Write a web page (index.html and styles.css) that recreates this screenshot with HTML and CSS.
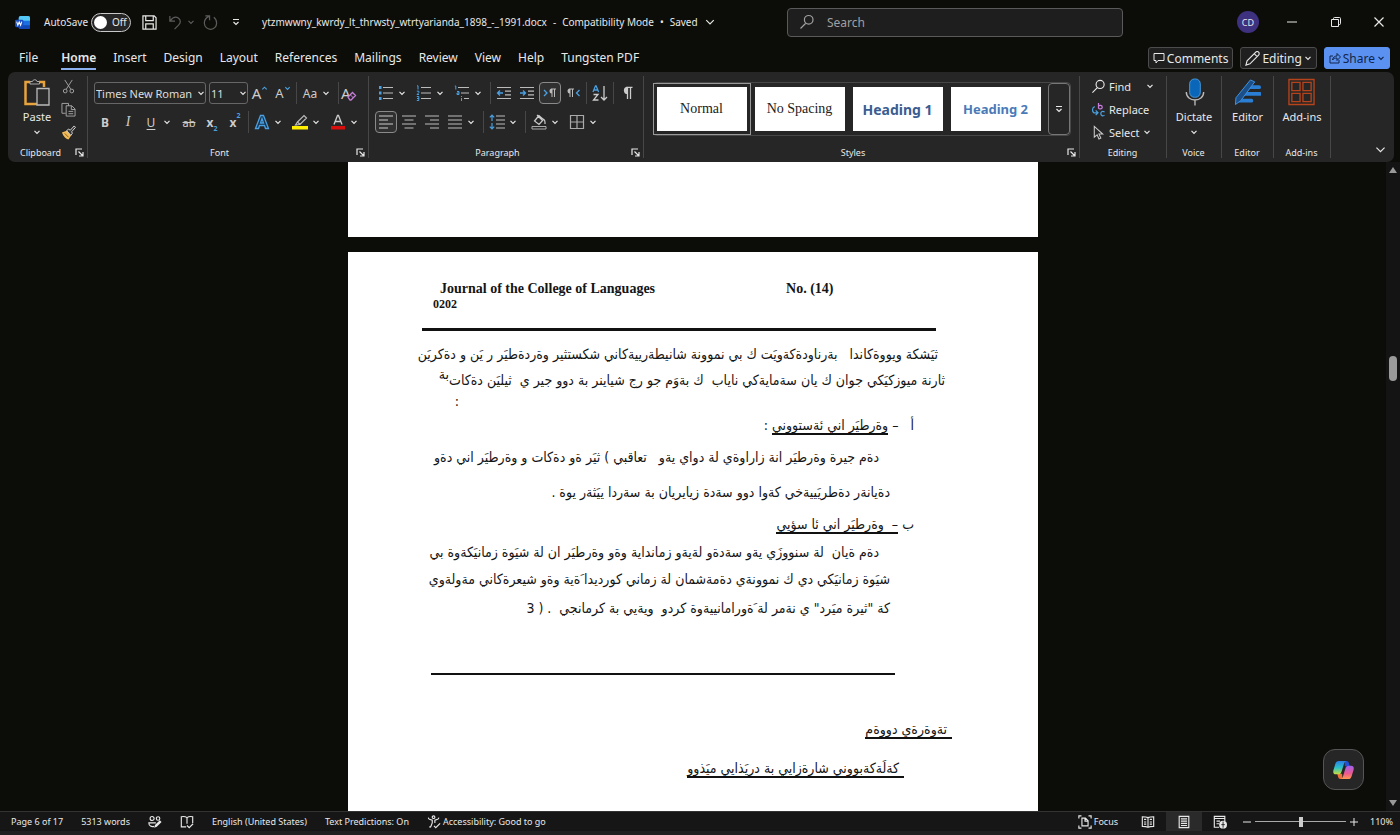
FILE: index.html
```html
<!DOCTYPE html>
<html lang="en">
<head>
    <meta charset="UTF-8">
    <meta name="viewport" content="width=device-width, initial-scale=1.0">
    <title>ytzmwwny_kwrdy_lt_thrwsty_wtrtyarianda_1898_-_1991.docx - Word</title>
    <link rel="stylesheet" href="styles.css">
</head>
<body>
    <!-- Shared icons -->
    <svg class="sprite" aria-hidden="true">
        <symbol id="chev" viewBox="0 0 8 8"><path d="M1.5 2.8 4 5.3 6.500 2.800" fill="none" stroke="currentColor" stroke-width="1.200" vector-effect="non-scaling-stroke"/></symbol>
        <symbol id="more" viewBox="0 0 8 8"><path d="M1 1.500h6M1.500 4 4 6.500 6.500 4" fill="none" stroke="currentColor" stroke-width="1.200"/></symbol>
        <symbol id="launch" viewBox="0 0 9 9"><path d="M1 7V1h6M3.500 3.500 8 8M8 4v4H4" fill="none" stroke="currentColor" stroke-width="1.200"/></symbol>
        <symbol id="lens" viewBox="0 0 16 16"><path d="M6.500 9.500 1.500 14.500M14 5.800a4.300 4.300 0 1 1-8.600 0 4.300 4.300 0 0 1 8.600 0z" fill="none" stroke="currentColor" stroke-width="1.200"/></symbol>
    </svg>

    <header class="titlebar">
        <div class="title-left">
            <svg class="word-logo" viewBox="0 0 16 16">
                <rect x="4" y="1" width="12" height="14" rx="2" fill="#1b6fe0"/>
                <path d="M6 1h8a2 2 0 0 1 2 2v3H4V3a2 2 0 0 1 2-2z" fill="#53c8f5"/>
                <path d="M4 11h12v2a2 2 0 0 1-2 2H6a2 2 0 0 1-2-2z" fill="#1247b8"/>
                <rect y="5" width="9" height="8" rx="1.500" fill="#1a4fc4"/>
                <path d="M1.800 7l1.200 4 1.500-3.600L6 11l1.200-4" fill="none" stroke="#fff" stroke-width="1.100"/>
            </svg>
            <label class="autosave">AutoSave
                <span class="toggle"><input type="checkbox"><span>Off</span></span>
            </label>
            <button class="qa" aria-label="Save"><svg viewBox="0 0 16 16"><path d="M1 1h12l2 2v12H1zM4 1v5h8V1M4 15V9.500h8V15" fill="none" stroke="currentColor" stroke-width="1.300"/></svg></button>
            <button class="qa dim" aria-label="Undo"><svg viewBox="0 0 16 16"><path d="M2 1v5.500h5.500M2.300 6.200C5 2.500 8.500 1.500 11 3.200c3 2.200 2.500 5.300.5 7.300L7 15" fill="none" stroke="currentColor" stroke-width="1.300"/></svg></button>
            <button class="qa-arrow dim" aria-label="Undo list"><svg><use href="#chev"/></svg></button>
            <button class="qa dim" aria-label="Redo"><svg viewBox="0 0 16 16"><path d="M2.500 1h4.500v4.500M6.500 1.500C3 3 1.200 5.500 1.500 9a6.500 6.500 0 0 0 13-.5c0-2.500-1-4.500-3-6" fill="none" stroke="currentColor" stroke-width="1.300"/></svg></button>
            <button class="qa-arrow last" aria-label="Customize toolbar"><svg><use href="#more"/></svg></button>
            <button class="doc-name"><span>ytzmwwny_kwrdy_lt_thrwsty_wtrtyarianda_1898_-_1991.docx</span><span>-</span><span>Compatibility Mode</span><span>•</span><span>Saved</span><svg><use href="#chev"/></svg></button>
        </div>
        <label class="search">
            <svg><use href="#lens"/></svg>
            <input type="search" placeholder="Search" aria-label="Search">
        </label>
        <div class="title-right">
            <button class="avatar">CD</button>
            <button class="win" aria-label="Minimize"><svg viewBox="0 0 10 10"><path d="M0 5h10" stroke="currentColor"/></svg></button>
            <button class="win" aria-label="Restore"><svg viewBox="0 0 10 10"><path d="M.5 2.500h7v7h-7zM2.500 2.500V1.500a1 1 0 0 1 1-1h5a1 1 0 0 1 1 1v5a1 1 0 0 1-1 1h-1" fill="none" stroke="currentColor"/></svg></button>
            <button class="win" aria-label="Close"><svg viewBox="0 0 10 10"><path d="M.5.5l9 9M9.500.5l-9 9" stroke="currentColor" stroke-width="1.200"/></svg></button>
        </div>
    </header>

    <nav class="tabs">
        <button class="tab file">File</button>
        <button class="tab active">Home</button>
        <button class="tab">Insert</button>
        <button class="tab">Design</button>
        <button class="tab">Layout</button>
        <button class="tab">References</button>
        <button class="tab">Mailings</button>
        <button class="tab">Review</button>
        <button class="tab">View</button>
        <button class="tab">Help</button>
        <button class="tab">Tungsten PDF</button>
        <div class="tab-actions">
            <button class="action"><svg viewBox="0 0 12 12"><path d="M1 1.500h10v7H5L3 11V8.500H1z" fill="none" stroke="currentColor"/></svg>Comments</button>
            <button class="action"><svg class="big" viewBox="0 0 16 16"><path d="M1 15l1.200-4.500L11.500 1.300a2 2 0 0 1 3 3L5.300 13.700zM10 3l3 3" fill="none" stroke="currentColor" stroke-width="1.200"/></svg>Editing<svg class="arrow"><use href="#chev"/></svg></button>
            <button class="action share"><svg viewBox="0 0 12 12"><path d="M4 4H1v7h9V8M3.500 8C4 5 6 4 8 4V1.500l3.500 3.500L8 8.500V6C6 6 4.500 6.500 3.500 8z" fill="none" stroke="currentColor"/></svg>Share<svg class="arrow"><use href="#chev"/></svg></button>
        </div>
    </nav>

    <section class="ribbon">
        <!-- Clipboard -->
        <div class="group clipboard">
            <div class="group-body">
                <button class="big-btn">
                    <svg class="paste-icon" viewBox="0 0 26 28">
                        <path d="M6 4H1.500v22H13M15 4h5v5" fill="none" stroke="#e8a33d" stroke-width="2.500"/>
                        <path d="M6 6V3.500h2.500a2.300 2.300 0 0 1 4.500 0H15.500V6z" fill="#262626" stroke="#aaa"/>
                        <path d="M13 10.500h12v16.500H13z" fill="#2b2b2b" stroke="#bbb" stroke-width="1.300"/>
                    </svg>
                    Paste
                    <svg class="arrow"><use href="#chev"/></svg>
                </button>
                <div class="stack">
                    <button aria-label="Cut"><svg viewBox="0 0 16 16"><path d="M4 1l6.500 10M12 1L5.500 11M6.500 12.800a2 2 0 1 1-4 0 2 2 0 0 1 4 0zM13.500 12.800a2 2 0 1 1-4 0 2 2 0 0 1 4 0z" fill="none" stroke="#a5a5a5"/></svg></button>
                    <button aria-label="Copy"><svg viewBox="0 0 16 16"><path d="M5 12H1V1.500h7V4M5.500 4h6l3.500 3.500V15H5.500zM11 4v4h4M8 10h5M8 12.500h5" fill="none" stroke="#a5a5a5"/></svg></button>
                    <button aria-label="Format painter"><svg viewBox="0 0 16 16"><path d="M1 8l5-2 5 5-3 4.500c-3-1-5.500-3-7-7.500z" fill="#f0b95a"/><path d="M6 6l2-1.500 2 1L14 1l1.500 1.500L11.500 7l.5 2-1.500 2z" fill="#333" stroke="#ddd"/><path d="M4 9l4 4" stroke="#8a5a10"/></svg></button>
                </div>
            </div>
            <div class="caption">Clipboard<button class="launcher" aria-label="Clipboard options"><svg><use href="#launch"/></svg></button></div>
        </div>

        <!-- Font -->
        <div class="group font">
            <div class="group-body rows">
                <div class="row">
                    <span class="combo combo-name"><select aria-label="Font"><option>Times New Roman</option></select><svg><use href="#chev"/></svg></span>
                    <span class="combo combo-size"><select aria-label="Font size"><option>11</option></select><svg><use href="#chev"/></svg></span>
                    <button class="tb big-a" aria-label="Grow font">A<svg class="mark" viewBox="0 0 8 8"><path d="M1.500 5 4 2.500 6.500 5" fill="none" stroke="#4aa0e0" stroke-width="1.300"/></svg></button>
                    <button class="tb small-a" aria-label="Shrink font">A<svg class="mark" viewBox="0 0 8 8"><path d="M1.500 2.500 4 5l2.500-2.500" fill="none" stroke="#4aa0e0" stroke-width="1.300"/></svg></button>
                    <i class="sep"></i>
                    <button class="tb">Aa</button><button class="tb-arrow" aria-label="Change case"><svg><use href="#chev"/></svg></button>
                    <i class="sep"></i>
                    <button class="tb clear" aria-label="Clear formatting">A<svg class="eraser" viewBox="0 0 10 10"><path d="M1 6l4.500-4.500 3 3L4 9H3z" fill="#262626" stroke="#c77ddb" stroke-width="1.300"/><path d="M3.500 4l3 3" stroke="#c77ddb"/></svg></button>
                </div>
                <div class="row">
                    <button class="tb bold">B</button>
                    <button class="tb italic">I</button>
                    <button class="tb under">U</button><button class="tb-arrow" aria-label="Underline style"><svg><use href="#chev"/></svg></button>
                    <button class="tb strike">ab</button>
                    <button class="tb bold">x<sub>2</sub></button>
                    <button class="tb bold">x<sup>2</sup></button>
                    <i class="sep"></i>
                    <button class="tb" aria-label="Text effects"><svg viewBox="0 0 16 16"><path d="M1.500 14.500 6.500 1.500h3l5 13h-3l-1-3h-5l-1 3zM6.500 9h3L8 4.500z" fill="#16324d" stroke="#4aa0e0" stroke-width="1.300"/></svg></button><button class="tb-arrow" aria-label="Effects list"><svg><use href="#chev"/></svg></button>
                    <button class="tb" aria-label="Highlight"><svg viewBox="0 0 16 16"><path d="M5.500 8 12 1.500l2.500 2.500L8 10.500l-4.500.5zM5.500 8 8 10.500" fill="none" stroke="#bbb" stroke-width="1.200"/><path d="M0 12h16v3.500H0z" fill="#ffee00"/></svg></button><button class="tb-arrow" aria-label="Highlight colors"><svg><use href="#chev"/></svg></button>
                    <button class="tb" aria-label="Font color"><svg viewBox="0 0 16 16"><path d="M4 10.500 7.500 1.500h1L12 10.500M5.200 7.500h5.600" fill="none" stroke="#ccc" stroke-width="1.300"/><path d="M1 12h14v3.500H1z" fill="#d80f0f"/></svg></button><button class="tb-arrow" aria-label="Font colors"><svg><use href="#chev"/></svg></button>
                </div>
            </div>
            <div class="caption">Font<button class="launcher" aria-label="Font options"><svg><use href="#launch"/></svg></button></div>
        </div>

        <!-- Paragraph -->
        <div class="group paragraph">
            <div class="group-body rows">
                <div class="row">
                    <button class="tb" aria-label="Bullets"><svg viewBox="0 0 16 16"><path d="M5 2.500h10M5 8h10M5 13.500h10" stroke="#bbb" stroke-width="1.200"/><path d="M1 1h2.500v3H1zM1 6.500h2.500v3H1zM1 12h2.500v3H1z" fill="#4aa0e0"/></svg></button><button class="tb-arrow" aria-label="Bullet library"><svg><use href="#chev"/></svg></button>
                    <button class="tb" aria-label="Numbering"><svg viewBox="0 0 16 16"><path d="M5 2.500h10M5 8h10M5 13.500h10" stroke="#bbb" stroke-width="1.200"/><path d="M1 .8h1V4.500M.8 6.200h2v1.500L1 9.500h2M.8 11.500h2v4h-2M1 13.500h1.800" fill="none" stroke="#4aa0e0"/></svg></button><button class="tb-arrow" aria-label="Number library"><svg><use href="#chev"/></svg></button>
                    <button class="tb" aria-label="Multilevel list"><svg viewBox="0 0 16 16"><path d="M4 2.500h11M7 8h8M10 13.500h5" stroke="#bbb" stroke-width="1.200"/><path d="M.8 1h1v3.500M3 6.500h2v3H3V8h2M7.500 11v1M7.500 13v3" fill="none" stroke="#4aa0e0"/></svg></button><button class="tb-arrow" aria-label="List styles"><svg><use href="#chev"/></svg></button>
                    <i class="sep"></i>
                    <button class="tb" aria-label="Decrease indent"><svg viewBox="0 0 16 16"><path d="M1 2.500h14M9 6.200h6M9 9.800h6M1 13.500h14" stroke="#bbb" stroke-width="1.200"/><path d="M7 8H1.500M4 5.500 1.500 8 4 10.500" fill="none" stroke="#4aa0e0" stroke-width="1.300"/></svg></button>
                    <button class="tb" aria-label="Increase indent"><svg viewBox="0 0 16 16"><path d="M1 2.500h14M9 6.200h6M9 9.800h6M1 13.500h14" stroke="#bbb" stroke-width="1.200"/><path d="M1 8h5.500M4 5.500 6.500 8 4 10.500" fill="none" stroke="#4aa0e0" stroke-width="1.300"/></svg></button>
                    <button class="tb on" aria-label="Left to right"><svg viewBox="0 0 16 16"><path d="M2 5l3 3-3 3" fill="none" stroke="#4aa0e0" stroke-width="1.300"/><path d="M10 4v8M12.500 4v8M14 4H9.500" fill="none" stroke="#bbb"/><path d="M10 3.500a2.500 2.500 0 0 0 0 5z" fill="#bbb"/></svg></button>
                    <button class="tb" aria-label="Right to left"><svg viewBox="0 0 16 16"><path d="M14.500 5l-3 3 3 3" fill="none" stroke="#4aa0e0" stroke-width="1.300"/><path d="M5 4v8M7.500 4v8M9 4H4.500" fill="none" stroke="#bbb"/><path d="M5 3.500a2.500 2.500 0 0 0 0 5z" fill="#bbb"/></svg></button>
                    <i class="sep"></i>
                    <button class="tb" aria-label="Sort"><svg viewBox="0 0 16 16"><path d="M1 7 3.500.8h.6L6.600 7M2 5h3.600" fill="none" stroke="#4aa0e0" stroke-width="1.300"/><path d="M1.500 9.500h4.500L1.500 15H6.500M12 1v14M9 12l3 3 3-3" fill="none" stroke="#ccc" stroke-width="1.300"/></svg></button>
                    <i class="sep"></i>
                    <button class="tb" aria-label="Show marks"><svg viewBox="0 0 16 16"><path d="M8.500 2v12M11.500 2v12M13.500 2.300H7.500" fill="none" stroke="#ccc" stroke-width="1.300"/><path d="M8.500 1.800a3.600 3.600 0 0 0 0 7.200z" fill="#ccc"/></svg></button>
                </div>
                <div class="row">
                    <button class="tb on" aria-label="Align left"><svg viewBox="0 0 16 16"><path d="M1 2h14M1 6h9M1 10h14M1 14h9" stroke="#ccc" stroke-width="1.200"/></svg></button>
                    <button class="tb" aria-label="Center"><svg viewBox="0 0 16 16"><path d="M1 2h14M3.500 6h9M1 10h14M3.500 14h9" stroke="#bbb" stroke-width="1.200"/></svg></button>
                    <button class="tb" aria-label="Align right"><svg viewBox="0 0 16 16"><path d="M1 2h14M6 6h9M1 10h14M6 14h9" stroke="#bbb" stroke-width="1.200"/></svg></button>
                    <button class="tb" aria-label="Justify"><svg viewBox="0 0 16 16"><path d="M1 2h14M1 6h14M1 10h14M1 14h14" stroke="#bbb" stroke-width="1.200"/></svg></button><button class="tb-arrow" aria-label="Justify options"><svg><use href="#chev"/></svg></button>
                    <i class="sep"></i>
                    <button class="tb" aria-label="Line spacing"><svg viewBox="0 0 16 16"><path d="M7 2h9M7 6h9M7 10h9M7 14h9" stroke="#bbb" stroke-width="1.200"/><path d="M3 1v6M.8 3.300 3 1l2.200 2.300M3 9v6M.8 12.700 3 15l2.200-2.300" fill="none" stroke="#4aa0e0" stroke-width="1.200"/></svg></button><button class="tb-arrow" aria-label="Spacing options"><svg><use href="#chev"/></svg></button>
                    <i class="sep"></i>
                    <button class="tb" aria-label="Shading"><svg viewBox="0 0 16 16"><path d="M8 1.500 3.500 7 8 10.500l4.500-5zM6 1l5 5M12.500 5c2 1 1.500 3 1.500 5" fill="none" stroke="#ccc" stroke-width="1.200"/><path d="M1 12.500h14v2.500H1z" fill="none" stroke="#aaa"/></svg></button><button class="tb-arrow" aria-label="Shading colors"><svg><use href="#chev"/></svg></button>
                    <button class="tb" aria-label="Borders"><svg viewBox="0 0 16 16"><path d="M1.500 1.500h13v13h-13zM8 1.500v13M1.500 8h13" fill="none" stroke="#aaa" stroke-width="1.200"/></svg></button><button class="tb-arrow" aria-label="Border options"><svg><use href="#chev"/></svg></button>
                </div>
            </div>
            <div class="caption">Paragraph<button class="launcher" aria-label="Paragraph options"><svg><use href="#launch"/></svg></button></div>
        </div>

        <!-- Styles -->
        <div class="group styles">
            <div class="group-body">
                <div class="gallery">
                    <button class="style selected">Normal</button>
                    <button class="style">No Spacing</button>
                    <button class="style h1">Heading 1</button>
                    <button class="style h2">Heading 2</button>
                    <button class="gallery-more" aria-label="More styles"><svg><use href="#more"/></svg></button>
                </div>
            </div>
            <div class="caption">Styles<button class="launcher" aria-label="Style options"><svg><use href="#launch"/></svg></button></div>
        </div>

        <!-- Editing -->
        <div class="group editing">
            <div class="group-body list">
                <button><svg><use href="#lens"/></svg>Find<svg class="arrow far"><use href="#chev"/></svg></button>
                <button><svg viewBox="0 0 16 16"><path d="M8 1v6M8 4.500c1-1.500 4-1 4 1S9 8 8 6.500" fill="none" stroke="#c77ddb" stroke-width="1.300"/><path d="M4 5C1 6 1 10 3 11.500h4M5 9l2.500 2.500L5 14M14.500 10.500c-3-1-4 0-4 2s2 3 4 1.500" fill="none" stroke="#4aa0e0" stroke-width="1.300"/></svg>Replace</button>
                <button><svg viewBox="0 0 16 16"><path d="M3.500 1.500v11.500l3-2.500 2 4.500 2-1-2-4.300h4z" fill="none" stroke="#ccc" stroke-width="1.100"/></svg>Select<svg class="arrow"><use href="#chev"/></svg></button>
            </div>
            <div class="caption">Editing</div>
        </div>

        <!-- Voice -->
        <div class="group voice">
            <div class="group-body">
                <button class="big-btn">
                    <svg class="tool-icon" viewBox="0 0 28 28"><rect x="9" y="0.500" width="11" height="19" rx="5" fill="#0a66b8" stroke="#4a9be0"/><path d="M5.500 14c0 11 18 11 18 0M14.500 22.500V28" fill="none" stroke="#bbb" stroke-width="1.400"/></svg>
                    Dictate
                    <svg class="arrow"><use href="#chev"/></svg>
                </button>
            </div>
            <div class="caption">Voice</div>
        </div>

        <!-- Editor -->
        <div class="group editor">
            <div class="group-body">
                <button class="big-btn">
                    <svg class="tool-icon" viewBox="0 0 28 28"><path d="M16 7h10a2 2 0 0 1 0 4H14zM13 14h14a2 2 0 0 1 0 4H10zM9 21h9a2 2 0 0 1 0 4H5z" fill="#2a7fd4"/><path d="M17 1.500l4.500 2L7 23l-5.500 4 .5-7z" fill="#1c4f88" stroke="#3c95e8"/></svg>
                    Editor
                </button>
            </div>
            <div class="caption">Editor</div>
        </div>

        <!-- Add-ins -->
        <div class="group addins">
            <div class="group-body">
                <button class="big-btn">
                    <svg class="tool-icon" viewBox="0 0 28 28"><path d="M1 1h26v26H1zM4 4h8.500v8.500H4zM15.500 4H24v8.500h-8.500zM4 15.500h8.500V24H4zM15.500 15.500H24V24h-8.500z" fill="none" stroke="#b5441c" stroke-width="1.400"/></svg>
                    Add-ins
                </button>
            </div>
            <div class="caption">Add-ins</div>
        </div>

        <button class="collapse" aria-label="Collapse ribbon"><svg><use href="#chev"/></svg></button>
    </section>

    <main class="workspace">
        <div class="canvas">
            <div class="page page-prev"></div>
            <article class="page page-current">
                <div class="running-head"><span>Journal of the College of Languages</span><span>No. (14)</span></div>
                <div class="issue-year">0202</div>
                <hr class="rule-top">
                <div class="text" dir="rtl" lang="ckb">
                    <p class="line in-1">ثيَشكة ويووةكاندا&nbsp;&nbsp; بةرناودةكةويَت ك بي نموونة شانيطةرييةكاني شكستثير وةردةطيَر ر يَن و دةكريَن</p>
                    <p class="line">ثارنة ميوزكيَكي جوان ك يان سةمايةكي ناياب&nbsp; ك بةوَم جو رج شياينر بة دوو جير ي&nbsp; ثيليَن دةكات&zwnj;<sup>بة</sup></p>
                    <p class="line colon">:</p>
                    <p class="line tall in-3">أ&nbsp;&nbsp; – <u>وةرطيَر اني ئةستووني</u> :</p>
                    <p class="line loose in-5">دةم جيرة وةرطيَر انة زاراوةي لة دواي يةو&nbsp;&nbsp; تعاقبي ) ثيَر ةو دةكات و وةرطيَر اني دةو</p>
                    <p class="line loose in-4">دةيانةر دةطريَييةخي كةوا دوو سةدة زيايريان بة سةردا ييَثةر يوة .</p>
                    <p class="line tall in-3">ب <u>–&nbsp; وةرطيَر اني ئا سؤيي</u></p>
                    <p class="line in-5">دةم ةيان&nbsp; لة سنووزَي يةو سةدةو لةيةو زمانداية وةو وةرطيَر ان لة شيَوة زمانيَكةوة بي</p>
                    <p class="line tall in-4">شيَوة زمانيَكي دي ك نموونةي دةمةشمان لة زماني كورديدا َةية وةو شيعرةكاني مةولةوي</p>
                    <p class="line tall in-4">كة "ثيرة ميَرد" ي نةمر لة َةورامانييةوة كردو&nbsp; ويةيي بة كرمانجي&nbsp; . ( 3</p>
                </div>
                <hr class="rule-mid">
                <div class="text closing" dir="rtl" lang="ckb">
                    <p class="line"><u>تةوةرةي دووةم</u></p>
                    <p class="line in-2"><u>كةلَةكةبووني شارةزايي بة دريَذايي ميَذوو</u></p>
                </div>
            </article>
            <button class="copilot" aria-label="Copilot">
                <svg viewBox="0 0 22 20">
                    <defs>
                        <linearGradient id="cool" x1="0" y1="0" x2="0" y2="1"><stop offset="0" stop-color="#2a7de8"/><stop offset=".5" stop-color="#2cc0c8"/><stop offset="1" stop-color="#c8dc3c"/></linearGradient>
                        <linearGradient id="warm" x1="0" y1="0" x2="0" y2="1"><stop offset="0" stop-color="#a060f0"/><stop offset=".6" stop-color="#f05a8c"/><stop offset="1" stop-color="#ff9a50"/></linearGradient>
                    </defs>
                    <path d="M12 .5h2c2 0 2.500 1.500 3 3.500l.5 2h-5z" fill="#2250d8"/>
                    <path d="M10 19.500H8c-2 0-2.500-1.500-3-3.500l-.5-2h5z" fill="#f0703c"/>
                    <path d="M6 .5h8c-1.500.5-2 1.500-2.500 3l-2.500 8c-.6 2-1.500 3-3.500 3H3C.5 14.500-.2 12.500.5 10L2.500 3.500C3.200 1.500 4.200.5 6 .5z" fill="url(#cool)"/>
                    <path d="M16 19.500H8c1.500-.5 2-1.500 2.500-3l2.500-8c.6-2 1.500-3 3.500-3H19c2.500 0 3.200 2 2.500 4.500l-2 6.500c-.7 2-1.700 3-3.500 3z" fill="url(#warm)"/>
                </svg>
            </button>
        </div>
        <div class="scrollbar">
            <svg viewBox="0 0 8 8"><path d="M4 1l4 6H0z" fill="#999"/></svg>
            <div class="thumb"></div>
            <svg viewBox="0 0 8 8"><path d="M4 7l4-6H0z" fill="#999"/></svg>
        </div>
    </main>

    <footer class="statusbar">
        <button>Page 6 of 17</button>
        <button>5313 words</button>
        <button aria-label="Editors"><svg viewBox="0 0 16 16"><path d="M7 4a2.300 2.300 0 1 1-4.600 0A2.300 2.300 0 0 1 7 4zM13.500 4a2 2 0 1 1-4 0 2 2 0 0 1 4 0zM7 13c-3 1-6-.5-6-4h8" fill="none" stroke="currentColor" stroke-width="1.300"/><path d="M7 14.500l1-3L13.500 6l2 2L10 13.500z" fill="currentColor"/></svg></button>
        <button aria-label="Proofing"><svg viewBox="0 0 16 16"><path d="M8 3C6 1.500 4 1.500 1.500 2v11.500H7M8 3c2-1.500 4-1.500 6.500-1v7M8 3v7M8 12l2.500 2.500L15 10" fill="none" stroke="currentColor" stroke-width="1.300"/></svg></button>
        <button>English (United States)</button>
        <button>Text Predictions: On</button>
        <button class="tight"><svg viewBox="0 0 16 16"><path d="M9 2.500a1.500 1.500 0 1 1-3 0 1.500 1.500 0 0 1 3 0zM2 4.500l4 1.500v3l-2 5M13 4.500L9 6v3M2 4.500 1.500 3M13 4.500l.5-1.500M4 14l-1.500-.5M8 12.500l2 2 5-5" fill="none" stroke="currentColor" stroke-width="1.300"/></svg>Accessibility: Good to go</button>
        <div class="view-tools">
            <button class="tight focus"><svg viewBox="0 0 16 16"><path d="M1 4V1h3M12 1h3v3M1 12v3h3M15 12v3h-3M4.500 3.500h4l3 3v6h-7zM8 3.500V7h3.500" fill="none" stroke="currentColor" stroke-width="1.300"/></svg>Focus</button>
            <button class="view" aria-label="Read mode"><svg viewBox="0 0 16 16"><path d="M8 3C6 2 4 2 1.500 2v11c2.500 0 4.500 0 6.500 1 2-1 4-1 6.500-1V2C12 2 10 2 8 3zv11M3.500 5h2.500M3.500 8h2.500M3.500 10.500h2.500M10 5h2.500M10 8h2.500M10 10.500h2.500" fill="none" stroke="currentColor" stroke-width="1.300"/></svg></button>
            <button class="view current" aria-label="Print layout"><svg viewBox="0 0 16 16"><path d="M2.500 1.500h11v13h-11zM4.500 4.500h7M4.500 7h7M4.500 9.500h7M4.500 12h7" fill="none" stroke="currentColor" stroke-width="1.300"/></svg></button>
            <button class="view" aria-label="Web layout"><svg viewBox="0 0 16 16"><path d="M7 14H1.500V1.500h12V7M1.500 4h12M4 7h4M4 10h3" fill="none" stroke="currentColor" stroke-width="1.300"/><circle cx="11.500" cy="11" r="4.500" fill="currentColor"/><path d="M11.500 7.500v7M9.500 11h4" stroke="#1b1b1b"/></svg></button>
            <button class="zoom-step" aria-label="Zoom out"><svg viewBox="0 0 8 8"><path d="M0 4h8" stroke="currentColor"/></svg></button>
            <input class="zoom" type="range" min="0" max="100" value="51" aria-label="Zoom">
            <button class="zoom-step" aria-label="Zoom in"><svg viewBox="0 0 8 8"><path d="M0 4h8M4 0v8" stroke="currentColor"/></svg></button>
            <button class="percent">110%</button>
        </div>
    </footer>
</body>
</html>
```

FILE: styles.css
```css
* {
    box-sizing: border-box;
}
body {
    margin: 0;
    height: 100vh;
    display: flex;
    flex-direction: column;
    overflow: hidden;
    background: #0c0d08;
    color: #e8e8e8;
    font-family: "Noto Sans", "Open Sans", sans-serif;
    font-size: 11px;
}
button {
    margin: 0;
    padding: 0;
    border: none;
    background: none;
    color: inherit;
    font: inherit;
    white-space: nowrap;
}
svg {
    display: block;
    flex: none;
    width: 8px;
    height: 8px;
}
.sprite {
    position: absolute;
    width: 0;
    height: 0;
}

/* Title bar */
.titlebar {
    display: grid;
    grid-template-columns: 787px minmax(120px, 336px) 1fr;
    align-items: center;
    height: 44px;
    flex: none;
}
.title-left {
    display: flex;
    align-items: center;
    padding-left: 15px;
    font-size: 10px;
}
.word-logo {
    width: 15px;
    height: 15px;
    margin-right: 14px;
}
.autosave {
    display: flex;
    align-items: center;
    gap: 3px;
    margin-right: 11px;
}
.toggle {
    display: flex;
    align-items: center;
    gap: 5px;
    width: 40px;
    height: 19px;
    padding: 0 2px;
    border: 1px solid #c8c8c8;
    border-radius: 10px;
    background: #262626;
}
.toggle input {
    appearance: none;
    width: 13px;
    height: 13px;
    margin: 0;
    border-radius: 50%;
    background: #fff;
}
.qa svg {
    width: 15px;
    height: 15px;
}
.qa {
    margin-right: 11px;
}
.qa.dim {
    margin-right: 4px;
}
.qa-arrow {
    margin-right: 8px;
}
.qa-arrow.last {
    margin: 0 22px 0 10px;
}
.dim {
    color: #5c5c5c;
}
.doc-name {
    display: flex;
    align-items: center;
    gap: 6px;
    font-size: 10px;
}
.doc-name svg {
    width: 12px;
    height: 12px;
}
.search {
    display: flex;
    align-items: center;
    gap: 10px;
    height: 29px;
    padding: 0 11px;
    border: 1px solid #5a5a5a;
    border-radius: 4px;
    background: #1e1e1e;
    color: #a0a0a0;
}
.search svg {
    width: 16px;
    height: 16px;
}
.search input {
    flex: 1;
    min-width: 0;
    border: none;
    outline: none;
    background: none;
    color: inherit;
    font: inherit;
    font-size: 12px;
}
.search input::placeholder {
    color: #a0a0a0;
}
.title-right {
    display: flex;
    align-items: center;
    justify-content: flex-end;
}
.avatar {
    width: 22px;
    height: 22px;
    margin-right: 11px;
    border-radius: 50%;
    background: #3e3180;
    font-size: 9px;
}
.win {
    display: grid;
    place-items: center;
    width: 44px;
    height: 30px;
}
.win:last-child {
    width: 42px;
}
.win svg {
    width: 10px;
    height: 10px;
}

/* Tabs */
.tabs {
    display: flex;
    align-items: center;
    gap: 17px;
    height: 28px;
    padding: 0 10px 0 19px;
    flex: none;
    font-size: 12px;
}
.tab {
    height: 24px;
    border-bottom: 2px solid transparent;
}
.tab.file {
    margin-right: 6px;
}
.tab.active {
    border-color: #8ab0f0;
    font-weight: 600;
}
.tab-actions {
    display: flex;
    gap: 7px;
    margin-left: auto;
}
.action {
    display: flex;
    align-items: center;
    gap: 2px;
    height: 22px;
    padding: 0 4px;
    border: 1px solid #4c4c4c;
    border-radius: 3px;
    background: #1f1f1f;
}
.action svg {
    width: 12px;
    height: 12px;
}
.action svg.big {
    width: 15px;
    height: 15px;
}
.action svg.arrow {
    width: 8px;
    height: 8px;
}
.action.share {
    border-color: #5b92f2;
    background: #5b92f2;
    color: #10254a;
}

/* Ribbon */
.ribbon {
    display: flex;
    height: 90px;
    margin: 0 6px 0 8px;
    padding: 4px 0;
    flex: none;
    border-radius: 7px;
    background: #262626;
}
.group {
    display: flex;
    flex-direction: column;
    flex: none;
    border-right: 1px solid #474747;
}
.group-body {
    display: flex;
    justify-content: center;
    flex: 1;
}
.caption {
    position: relative;
    height: 14px;
    padding-right: 17px;
    line-height: 18px;
    text-align: center;
    font-size: 9px;
}
.caption:not(:has(.launcher)) {
    padding-right: 1px;
}
.launcher {
    position: absolute;
    right: 3px;
    top: 4px;
}
.launcher svg {
    width: 9px;
    height: 9px;
}
.clipboard {
    width: 80px;
}
.font {
    width: 281px;
}
.paragraph {
    width: 275px;
}
.styles {
    width: 436px;
}
.editing {
    width: 87px;
}
.voice {
    width: 55px;
}
.editor {
    width: 52px;
}
.addins {
    width: 57px;
}
.clipboard .group-body {
    gap: 10px;
    padding-left: 4px;
}
.clipboard .caption {
    padding-right: 14px;
}
.big-btn {
    display: flex;
    flex-direction: column;
    align-items: center;
    gap: 2px;
    padding-top: 2px;
    font-size: 11px;
    line-height: 18px;
}
.paste-icon {
    width: 26px;
    height: 28px;
}
.tool-icon {
    width: 27px;
    height: 28px;
}
.stack {
    display: flex;
    flex-direction: column;
    gap: 8px;
    padding-top: 3px;
}
.stack svg {
    width: 15px;
    height: 15px;
}
.rows {
    flex-direction: column;
    justify-content: flex-start;
    gap: 7px;
    padding: 6px 0 0 6px;
}
.row {
    display: flex;
    align-items: center;
    gap: 1px;
    height: 22px;
}
.tb {
    position: relative;
    display: flex;
    align-items: center;
    justify-content: center;
    width: 22px;
    height: 22px;
    font-size: 12px;
    color: #ccc;
}
.tb svg {
    width: 16px;
    height: 16px;
}
.tb.on {
    border: 1px solid #8a8a8a;
    border-radius: 4px;
    background: #303030;
}
.tb-arrow {
    width: 10px;
    margin-right: 4px;
}
.sep {
    width: 1px;
    height: 22px;
    margin: 0 1px;
    background: #474747;
}
.bold {
    font-weight: 700;
}
.italic {
    font-family: "Liberation Serif", serif;
    font-style: italic;
    font-size: 14px;
}
.under {
    text-decoration: underline;
    text-underline-offset: 2px;
}
.strike {
    font-size: 11px;
    text-decoration: line-through;
}
.tb sub, .tb sup {
    color: #4aa0e0;
    font-size: 7px;
}
.tb sub {
    align-self: flex-end;
}
.tb sup {
    align-self: flex-start;
}
.big-a, .clear {
    font-size: 15px;
}
.clear {
    justify-content: flex-start;
}
.small-a {
    font-size: 13px;
}
.tb .mark {
    width: 7px;
    height: 7px;
    margin-bottom: 9px;
}
.tb .eraser {
    position: absolute;
    right: 6px;
    bottom: 3px;
    width: 10px;
    height: 10px;
}
.combo {
    position: relative;
    height: 22px;
}
.combo select {
    appearance: none;
    width: 100%;
    height: 22px;
    padding: 0 1px;
    border: 1px solid #666;
    border-radius: 3px;
    background: #262626;
    color: #ddd;
    font: inherit;
}
.combo svg {
    position: absolute;
    right: 1px;
    top: 7px;
}
.combo-name {
    width: 112px;
    margin-right: 2px;
}
.combo-size {
    width: 39px;
}

/* Style gallery */
.gallery {
    display: flex;
    gap: 2px;
    height: 54px;
    margin-top: 6px;
    border: 1px solid #474747;
    border-radius: 4px;
}
.style {
    width: 96px;
    height: 50px;
    margin-top: 1px;
    border: 3px solid #262626;
    background: #fff;
    color: #222;
    font-family: "Liberation Serif", serif;
    font-size: 14px;
}
.style.selected {
    outline: 1px solid #999;
}
.style.h1, .style.h2 {
    font-family: "Noto Sans", sans-serif;
    font-weight: 700;
    font-size: 14px;
    color: #3a5d92;
}
.style.h2 {
    font-size: 13px;
    color: #4a7ab8;
}
.gallery-more {
    display: grid;
    place-items: center;
    width: 22px;
    margin-left: 2px;
    border: 1px solid #777;
    border-radius: 4px;
}
.list {
    flex-direction: column;
    justify-content: flex-start;
    align-items: stretch;
    gap: 3px;
    padding-left: 11px;
}
.list button {
    display: flex;
    align-items: center;
    gap: 3px;
    height: 20px;
}
.list svg {
    width: 15px;
    height: 15px;
}
.list svg.arrow {
    width: 8px;
    height: 8px;
}
.list svg.far {
    margin-left: 12px;
}
.collapse {
    align-self: flex-end;
    margin: 0 7px 2px auto;
}
.collapse svg {
    width: 13px;
    height: 13px;
}

/* Document area */
.workspace {
    display: flex;
    flex: 1;
    min-height: 0;
}
.canvas {
    position: relative;
    display: flex;
    flex-direction: column;
    align-items: center;
    gap: 15px;
    flex: 1;
    overflow: hidden;
}
.page {
    width: 690px;
    background: #fff;
    color: #151515;
    flex: none;
}
.page-prev {
    height: 75px;
}
.page-current {
    height: 1000px;
    padding: 28px 86px 0 74px;
}
.running-head {
    display: flex;
    gap: 131px;
    padding-left: 18px;
    font-family: "Liberation Serif", serif;
    font-weight: 700;
    font-size: 14px;
    line-height: 18px;
}
.issue-year {
    padding-left: 11px;
    font-family: "Liberation Serif", serif;
    font-weight: 700;
    font-size: 12px;
    line-height: 12px;
}
.rule-top {
    height: 3px;
    margin: 18px 16px 0 0;
    border: none;
    background: #111;
}
.text {
    margin: 10px 7px 0 0;
    font-family: "DejaVu Sans Condensed", "DejaVu Sans", sans-serif;
    font-size: 14px;
    white-space: nowrap;
}
.line {
    margin: 0;
    height: 26px;
    line-height: 26px;
}
.line.tall {
    height: 29px;
    line-height: 29px;
}
.line.loose {
    height: 35px;
    line-height: 35px;
}
.line u {
    display: inline-block;
    line-height: 16px;
    border-bottom: 2px solid #111;
    text-decoration: none;
}
.line sup {
    font-size: inherit;
    line-height: 0;
}
.line.colon {
    height: 18px;
    line-height: 16px;
    padding-right: 486px;
}
.in-1 {
    padding-right: 7px;
}
.in-2 {
    padding-right: 48px;
}
.in-3 {
    padding-right: 31px;
}
.in-4 {
    padding-right: 55px;
}
.in-5 {
    padding-right: 66px;
}
.rule-mid {
    height: 2px;
    margin: 50px 57px 0 9px;
    border: none;
    background: #111;
}
.text.closing {
    margin: 41px 0 0;
}
.closing .line {
    height: 39px;
}
.closing u {
    padding-right: 5px;
}
.copilot {
    position: absolute;
    right: 22px;
    bottom: 21px;
    display: grid;
    place-items: center;
    width: 41px;
    height: 41px;
    border: 1px solid #555;
    border-radius: 12px;
    background: #262626;
}
.copilot svg {
    width: 21px;
    height: 20px;
}
.scrollbar {
    display: flex;
    flex-direction: column;
    align-items: center;
    width: 14px;
    padding: 4px 0;
    background: #141414;
}
.thumb {
    width: 8px;
    height: 25px;
    margin: 182px 0 auto;
    border-radius: 4px;
    background: #9a9a9a;
}

/* Status bar */
.statusbar {
    display: flex;
    align-items: center;
    gap: 18px;
    height: 24px;
    padding: 0 7px 0 11px;
    flex: none;
    border-top: 1px solid #333;
    border-bottom: 4px solid #202020;
    background: #161616;
    font-size: 9px;
}
.statusbar button {
    display: flex;
    align-items: center;
}
.statusbar svg {
    width: 14px;
    height: 14px;
}
.statusbar .tight {
    gap: 2px;
}
.view-tools {
    display: flex;
    align-items: center;
    height: 19px;
    margin-left: auto;
}
.focus {
    margin-right: 12px;
}
.view {
    justify-content: center;
    width: 36px;
    height: 19px;
}
.view.current {
    background: #2a2a2a;
}
.view + .zoom-step {
    margin-left: 5px;
}
.view-tools .zoom-step svg {
    width: 8px;
    height: 8px;
}
.zoom {
    appearance: none;
    width: 91px;
    height: 12px;
    margin: 0 4px;
    background: linear-gradient(#aaa, #aaa) center / 100% 1px no-repeat;
}
.zoom::-webkit-slider-thumb {
    appearance: none;
    width: 4px;
    height: 10px;
    background: #ccc;
}
.percent {
    margin-left: 12px;
}
```
